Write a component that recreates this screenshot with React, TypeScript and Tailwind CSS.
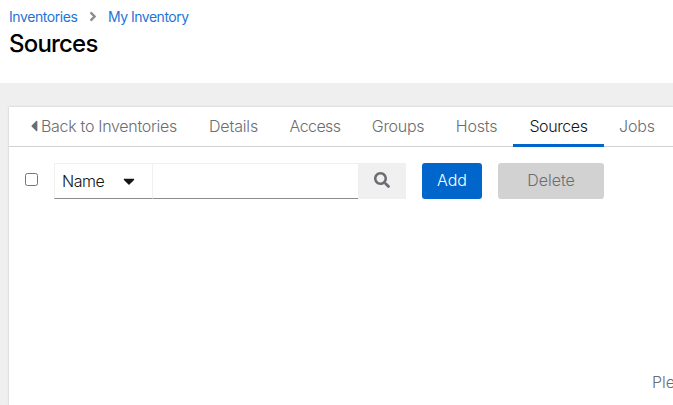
import React from "react";
import { FaAngleRight, FaCaretDown, FaCaretLeft, FaSearch } from "react-icons/fa";

const tabs = [
  { label: "Details", width: "w-[81px]", tracking: "tracking-[-0.15px]" },
  { label: "Access", width: "w-[82px]", tracking: "tracking-[-0.6px]" },
  { label: "Groups", width: "w-[84px]", tracking: "tracking-[-0.3px]" },
  { label: "Hosts", width: "w-[73px]", tracking: "tracking-[-0.2px]" },
  { label: "Sources", width: "w-[91px]", tracking: "tracking-[-0.4px]", active: true },
  { label: "Jobs", width: "w-[66px]", tracking: "tracking-[-0.1px]" },
];

export default function App() {
  return (
    <div className="flex h-screen w-full flex-col overflow-hidden bg-[#efefef] font-['Inter','Liberation_Sans',sans-serif] text-base font-light text-[#151515]">
      <header className="h-[83px] shrink-0 bg-white pl-[9px] pt-[6px]">
        <nav className="flex h-[21px] items-center text-[14px] font-normal text-[#1f74d4]">
          <a className="w-[78px] tracking-[-0.42px]">Inventories</a>
          <FaAngleRight className="h-[15px] w-[12px] text-[#8a8d90]" />
          <a className="ml-[9px] tracking-[-0.5px]">My Inventory</a>
        </nav>
        <h1 className="pt-px text-[24px] font-medium leading-[32px] tracking-[-0.8px] text-black">Sources</h1>
      </header>
      <main className="ml-[9px] mt-6 flex min-h-0 flex-1 flex-col bg-white shadow-[0_0_2px_rgba(3,3,3,0.2)]">
        <div className="flex h-10 shrink-0 border-b border-[#d2d2d2] text-[#6a6e73]">
          <a className="flex w-[184px] shrink-0 items-center pb-px pl-[19px]">
            <FaCaretLeft className="mr-px h-[18px] w-[12px]" />
            <span className="whitespace-nowrap tracking-[-0.3px]">Back to Inventories</span>
          </a>
          {tabs.map((tab) => (
            <a
              key={tab.label}
              className={`${tab.width} ${tab.tracking} flex h-10 shrink-0 items-center justify-center ${
                tab.active ? "border-b-[3px] border-[#0066cc] pt-px text-[#151515]" : "pb-[2px]"
              }`}
            >
              {tab.label}
            </a>
          ))}
        </div>
        <div className="flex shrink-0 items-center pl-4 pt-4">
          <input type="checkbox" className="mb-1 size-[13px] shrink-0" />
          <div className="ml-4 flex h-9">
            <button className="flex w-[99px] items-center border border-[#f0f0f0] border-b-[#8a8d90] pb-px pl-[7px]">
              <span className="w-[58px] text-left tracking-[-0.5px]">Name</span>
              <FaCaretDown className="size-[18px]" />
            </button>
            <input className="w-[205px] border-b border-t border-b-[#8a8d90] border-t-[#f0f0f0] outline-none" />
            <button className="flex w-12 items-center justify-center bg-[#f0f0f0] pb-[2px] text-[#6a6e73]">
              <FaSearch className="size-4" />
            </button>
          </div>
          <button className="ml-4 h-9 w-[60px] rounded-[3px] bg-[#0066cc] pb-[2px] text-white">Add</button>
          <button className="ml-4 h-9 w-[106px] rounded-[3px] bg-[#d2d2d2] pb-[2px] text-[#6a6e73]">Delete</button>
        </div>
        <p className="ml-[643px] mt-[171px] whitespace-nowrap leading-6 text-[#6a6e73]">Please add Sources to populate this list</p>
      </main>
    </div>
  );
}
